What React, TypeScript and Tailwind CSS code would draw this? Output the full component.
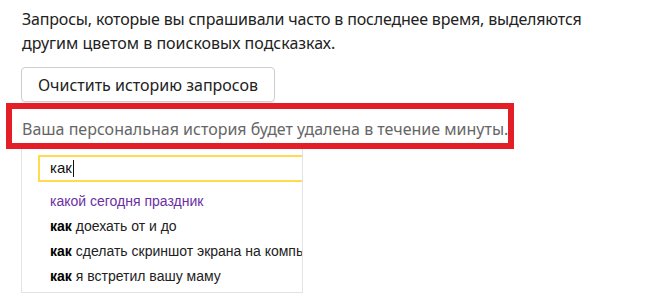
import React from "react";

export default function App() {
  const sans = { fontFamily: '"Noto Sans", "Open Sans", sans-serif' };
  const arial = { fontFamily: '"Liberation Sans", Arial, sans-serif' };
  return (
    <div className="w-[650px] h-[300px] bg-white overflow-hidden flex flex-col" style={sans}>
      <p className="ml-[22px] pt-[7px] text-[16px] leading-[24px] text-[#222]">
        <span className="tracking-[-0.18px]">Запросы, которые вы спрашивали часто в последнее время, выделяются</span>
        <br />
        другим цветом в поисковых подсказках.
      </p>
      <div className="mt-[12px] ml-[21px] w-[254px] h-[35px] border border-[#cfcfcf] rounded-[4px] flex items-center justify-center text-[16px] text-[#222] shadow-[0_1px_1px_rgba(0,0,0,0.08)]">
        Очистить историю запросов
      </div>
      <div className="mt-[1px] ml-[6px] w-[508px] h-[46px] border-[6px] border-[#e41e26] pl-[10px] pt-[8px] text-[16px] leading-[24px] text-[#666] whitespace-nowrap">
        Ваша персональная история будет удалена в течение минуты.
      </div>
      <div className="ml-[21px] w-[282px] h-[144px] border border-t-0 border-[#e3e3e3] overflow-hidden flex flex-col" style={arial}>
        <div className="mt-[6px] ml-[16px] w-[280px] shrink-0 h-[27px] border-2 border-[#ffdb4d] flex items-center pl-[10px] text-[15px] text-[#111]">
          как
          <span className="w-px h-[17px] bg-[#111] ml-px" />
        </div>
        <div className="mt-[7px] ml-[28px] flex flex-col text-[14px] whitespace-nowrap">
          <div className="h-[25px] flex items-center text-[#6b2fa3]">какой сегодня праздник</div>
          <div className="h-[25px] flex items-center text-[#222]"><b className="text-black mr-[4px]">как</b>доехать от и до</div>
          <div className="h-[25px] flex items-center text-[#222]"><b className="text-black mr-[4px]">как</b>сделать скриншот экрана на компь</div>
          <div className="h-[25px] flex items-center text-[#222]"><b className="text-black mr-[4px]">как</b>я встретил вашу маму</div>
        </div>
      </div>
    </div>
  );
}
